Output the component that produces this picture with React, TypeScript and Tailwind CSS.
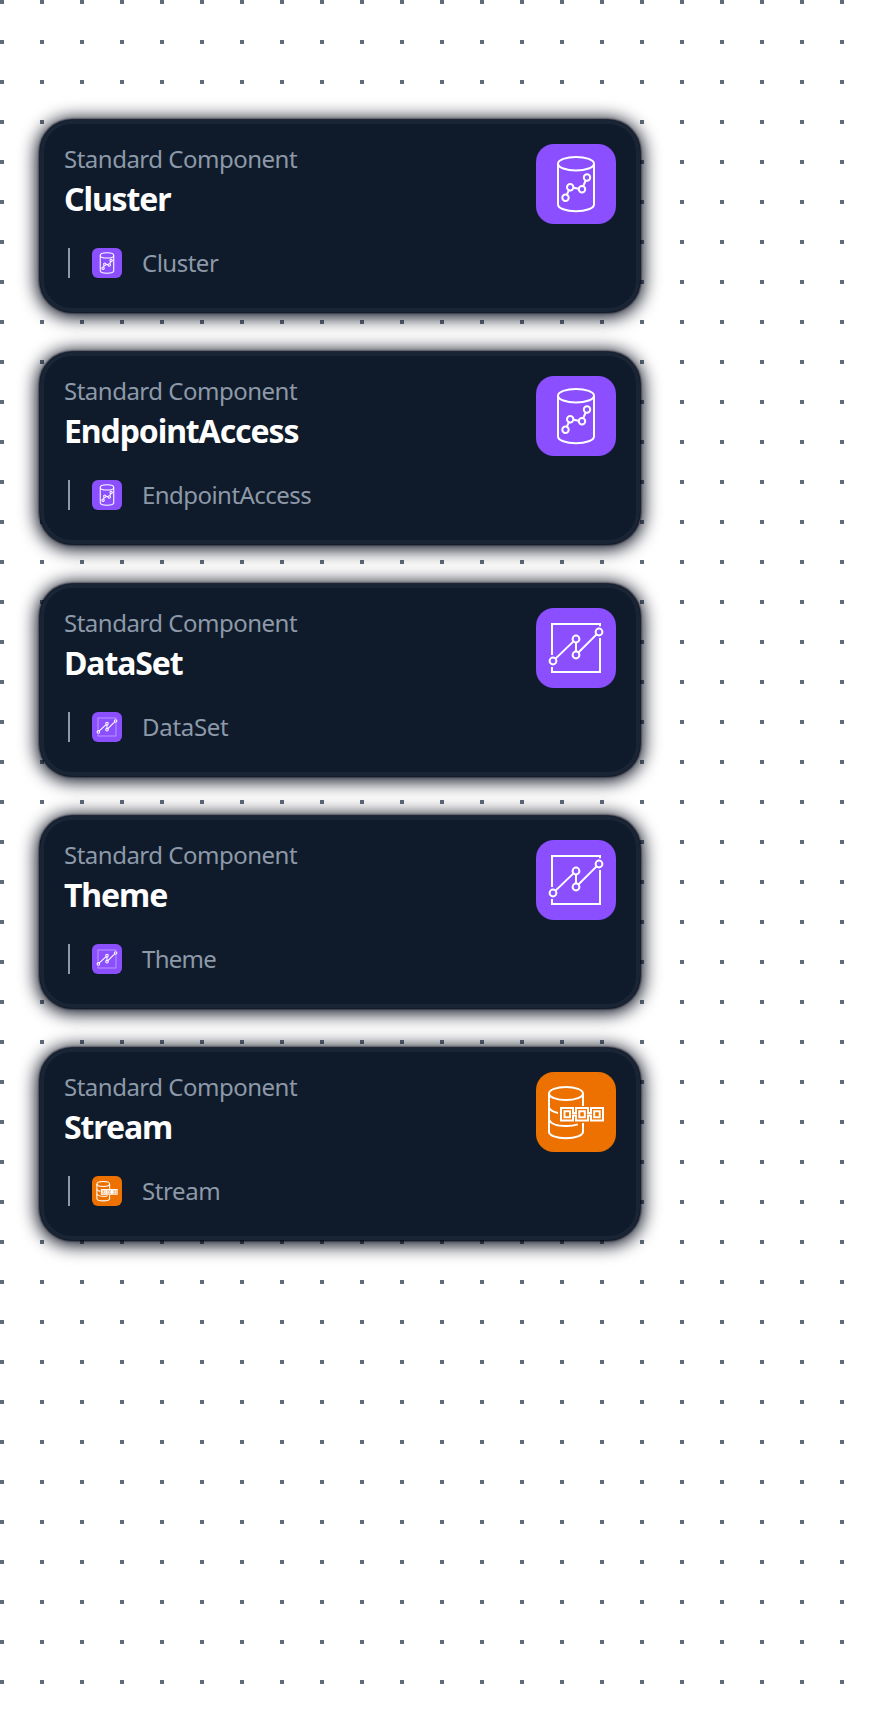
import type { ReactNode } from "react";

type Kind = "cluster" | "chart" | "stream";

const glyphs: Record<Kind, ReactNode> = {
  cluster: (
    <>
      <ellipse cx="40" cy="19.7" rx="18" ry="6.8" />
      <path d="M22 19.7V60.5C22 64.3 30 67.2 40 67.2S58 64.3 58 60.5V19.7" />
      <circle cx="29.5" cy="53.8" r="3.2" />
      <circle cx="34.2" cy="43.2" r="3.2" />
      <circle cx="46" cy="45.2" r="3.2" />
      <circle cx="51" cy="33.5" r="3.2" />
      <path d="M30.8 50.8L32.9 46.2M37.4 43.7L42.8 44.7M47.2 42.2L49.7 36.5" />
    </>
  ),
  chart: (
    <>
      <path className="in-data-small:opacity-40" d="M64 18.3V16H16V47M16 59V64H64V30" />
      <circle cx="17" cy="53" r="3.4" />
      <circle cx="40" cy="31" r="3.4" />
      <circle cx="40" cy="47" r="3.4" />
      <circle cx="63" cy="24" r="3.4" />
      <path d="M19.5 50.6L37.5 33.4M40 34.4V43.6M42.4 44.5L60.6 26.4" />
    </>
  ),
  stream: (
    <>
      <ellipse cx="30" cy="21.5" rx="17" ry="6.6" />
      <path d="M13 21.5V59.8C13 63.5 20.5 66.3 30 66.3S47 63.5 47 59.8V51M47 34V21.5" />
      <path d="M13 35.5C14 38.3 17.5 40 22 41M13 47.5C14.5 51.5 21 54 30 54C35 54 38.5 53.5 41.8 52.4" />
      <path d="M25 36H37V41H40V36H52V41H55V36H67V48.5H55V43.5H52V48.5H40V43.5H37V48.5H25Z" />
      <path d="M28.5 39.2H34V45.2H28.5ZM43.3 39.2H48.8V45.2H43.3ZM58.2 39.2H63.7V45.2H58.2Z" />
    </>
  ),
};

function Glyph({ kind, small }: { kind: Kind; small?: boolean }) {
  return (
    <svg
      viewBox="0 0 80 80"
      className="size-full"
      fill="none"
      stroke="#fff"
      strokeWidth={small ? 2.8 : 2}
      data-small={small ? "" : undefined}
    >
      {glyphs[kind]}
    </svg>
  );
}

const cards: { name: string; kind: Kind; labelSpacing: string }[] = [
  { name: "Cluster", kind: "cluster", labelSpacing: "tracking-[-0.5px]" },
  { name: "EndpointAccess", kind: "cluster", labelSpacing: "tracking-[-0.55px]" },
  { name: "DataSet", kind: "chart", labelSpacing: "tracking-[-0.3px]" },
  { name: "Theme", kind: "chart", labelSpacing: "tracking-[-0.7px]" },
  { name: "Stream", kind: "stream", labelSpacing: "tracking-[-0.4px]" },
];

export default function App() {
  return (
    <main className="h-[1718px] w-full bg-[conic-gradient(from_270deg_at_4px_4px,#5f6b7a_90deg,#fff_0)] bg-[length:40px_40px]">
      <div className="flex flex-col gap-10 px-10 pt-[120px] font-['Noto_Sans',sans-serif]">
        {cards.map((c) => (
          <article
            key={c.name}
            className="flex h-48 w-[600px] flex-col rounded-[32px] border-4 border-[#192534] bg-[#0f1b2a] px-5 pt-5 shadow-[0_0_2px_1px_#000716,0_2px_18px_3px_#000716]"
          >
            <div className="flex h-20 justify-between">
              <div className="flex flex-col whitespace-nowrap">
                <span className="-mt-px h-8 text-2xl leading-8 tracking-[-0.5px] text-[#8d99a8]">Standard Component</span>
                <h2 className="mt-0.5 text-[32px] leading-[44px] font-bold tracking-[-1.1px] text-white">{c.name}</h2>
              </div>
              <div className={"size-20 rounded-[18px] " + (c.kind === "stream" ? "bg-[#ed7100]" : "bg-[#8c4fff]")}>
                <Glyph kind={c.kind} />
              </div>
            </div>
            <div className="mt-6 flex h-[30px] items-center pl-1">
              <span className="h-[30px] w-0.5 bg-[#8d99a8]" />
              <span className={"ml-[22px] size-[30px] rounded-md " + (c.kind === "stream" ? "bg-[#ed7100]" : "bg-[#8c4fff]")}>
                <Glyph kind={c.kind} small />
              </span>
              <span className={"ml-5 text-2xl leading-8 whitespace-nowrap text-[#8d99a8] " + c.labelSpacing}>{c.name}</span>
            </div>
          </article>
        ))}
      </div>
    </main>
  );
}
